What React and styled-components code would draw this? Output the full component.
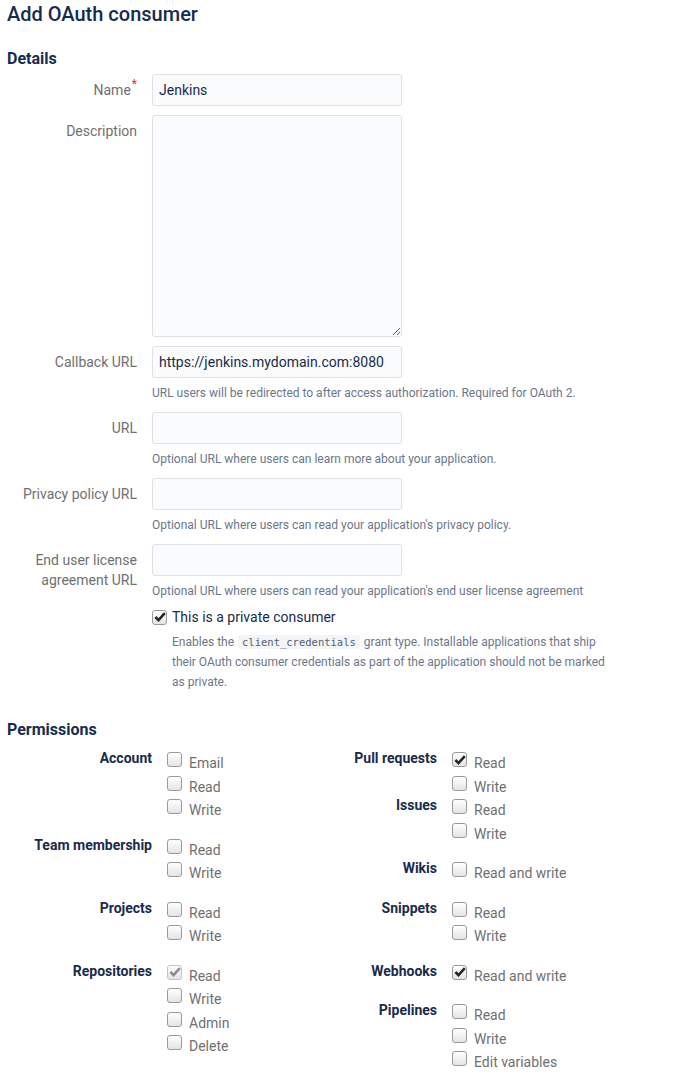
import React from "react";
import styled, { createGlobalStyle } from "styled-components";

const GlobalStyle = createGlobalStyle`
  body {
    margin: 0;
    background: #fff;
    font-family: Roboto, "Liberation Sans", sans-serif;
    color: #172b4d;
  }
`;

const Page = styled.div`
  padding: 2px 7px 20px;
`;

const Title = styled.h1`
  margin: 0;
  font-size: 20px;
  line-height: 24px;
  font-weight: 500;
  color: #172b4d;
`;

const SectionTitle = styled.h2`
  margin: ${(p) => p.$top}px 0 0;
  font-size: 16px;
  line-height: 20px;
  font-weight: 700;
  color: #172b4d;
`;

const Form = styled.div`
  display: flex;
  flex-direction: column;
  gap: 9px;
  margin-top: 5px;
`;

const Row = styled.div`
  display: grid;
  grid-template-columns: 130px 1fr;
  column-gap: 15px;
`;

const Label = styled.label`
  padding-top: 6px;
  font-size: 14px;
  line-height: 20px;
  color: #707070;
  text-align: right;
`;

const Required = styled.span`
  color: #de350b;
  font-size: 12px;
  vertical-align: top;
  position: relative;
  top: -6px;
  margin-left: 1px;
`;

const Field = styled.div`
  display: flex;
  flex-direction: column;
`;

const Input = styled.input`
  box-sizing: border-box;
  width: 250px;
  height: 32px;
  padding: 0 6px;
  border: 1px solid #dfe1e6;
  border-radius: 3px;
  background: #fafbfc;
  font-family: Roboto, "Liberation Sans", sans-serif;
  font-size: 14px;
  color: #172b4d;
  outline: none;
`;

const TextArea = styled.textarea`
  box-sizing: border-box;
  width: 250px;
  height: 222px;
  border: 1px solid #dfe1e6;
  border-radius: 3px;
  background: #fafbfc;
  outline: none;
  display: block;
`;

const Help = styled.div`
  margin-top: 6px;
  font-size: 12px;
  line-height: 19px;
  color: #6b778c;
`;

const PrivateRow = styled.div`
  display: flex;
  align-items: center;
  gap: 5px;
  margin-top: 6px;
  height: 20px;
  font-size: 14px;
  color: #172b4d;
`;

const PrivateHelp = styled.div`
  margin: 5px 0 0 20px;
  max-width: 440px;
  font-size: 12px;
  line-height: 20px;
  color: #6b778c;
`;

const Code = styled.code`
  display: inline-block;
  font-family: "DejaVu Sans Mono", "Liberation Mono", monospace;
  font-size: 10.5px;
  line-height: 14px;
  background: #f4f5f7;
  color: #505f79;
  padding: 0 4px;
  margin: 0 1px;
  border-radius: 3px;
`;

const Perms = styled.div`
  display: grid;
  grid-template-columns: 285px 285px;
  margin-top: 8px;
`;

const Column = styled.div`
  display: flex;
  flex-direction: column;
`;

const Group = styled.div`
  display: grid;
  grid-template-columns: 145px 1fr;
  column-gap: 15px;
  margin-bottom: ${(p) => (p.$tight ? 0 : 16)}px;
`;

const GroupLabel = styled.div`
  font-size: 14px;
  line-height: 20px;
  font-weight: 700;
  color: #172b4d;
  text-align: right;
`;

const Items = styled.div`
  display: flex;
  flex-direction: column;
`;

const Item = styled.div`
  display: flex;
  align-items: flex-start;
  gap: 7px;
  height: 23.5px;
  font-size: 14px;
  color: #707070;
`;

const ItemText = styled.span`
  padding-top: 5px;
  line-height: 20px;
`;

const Box = styled.span`
  box-sizing: border-box;
  flex: none;
  width: 15px;
  height: 15px;
  margin-top: ${(p) => p.$top ?? 4}px;
  border: 1px solid ${(p) => (p.$disabled ? "#c4c4c4" : "#9a9a9a")};
  border-radius: 3px;
  background: linear-gradient(#ffffff, #e4e4e4);
  display: flex;
  align-items: center;
  justify-content: center;
`;

function CheckBox({ checked, disabled, top }) {
  return (
    <Box $disabled={disabled} $top={top}>
      {checked && (
        <svg width="12" height="12" viewBox="0 0 12 12">
          <path
            d="M1.4 6 L4.5 9.1 L10.8 2.2"
            fill="none"
            stroke={disabled ? "#8d8d8d" : "#262626"}
            strokeWidth="2.6"
          />
        </svg>
      )}
    </Box>
  );
}

const leftGroups = [
  { name: "Account", items: ["Email", "Read", "Write"] },
  { name: "Team membership", items: ["Read", "Write"] },
  { name: "Projects", items: ["Read", "Write"] },
  {
    name: "Repositories",
    items: [{ t: "Read", checked: true, disabled: true }, "Write", "Admin", "Delete"],
  },
];

const rightGroups = [
  { name: "Pull requests", items: [{ t: "Read", checked: true }, "Write"], tight: true },
  { name: "Issues", items: ["Read", "Write"] },
  { name: "Wikis", items: ["Read and write"] },
  { name: "Snippets", items: ["Read", "Write"] },
  { name: "Webhooks", items: [{ t: "Read and write", checked: true }] },
  { name: "Pipelines", items: ["Read", "Write", "Edit variables"] },
];

function PermColumn({ groups }) {
  return (
    <Column>
      {groups.map((g) => (
        <Group key={g.name} $tight={g.tight}>
          <GroupLabel>{g.name}</GroupLabel>
          <Items>
            {g.items.map((it, i) => {
              const item = typeof it === "string" ? { t: it } : it;
              return (
                <Item key={i}>
                  <CheckBox checked={item.checked} disabled={item.disabled} />
                  <ItemText>{item.t}</ItemText>
                </Item>
              );
            })}
          </Items>
        </Group>
      ))}
    </Column>
  );
}

const urlFields = [
  {
    label: "Callback URL",
    value: "https://jenkins.mydomain.com:8080",
    help: "URL users will be redirected to after access authorization. Required for OAuth 2.",
  },
  {
    label: "URL",
    value: "",
    help: "Optional URL where users can learn more about your application.",
  },
  {
    label: "Privacy policy URL",
    value: "",
    help: "Optional URL where users can read your application's privacy policy.",
  },
];

export default function App() {
  return (
    <Page>
      <GlobalStyle />
      <Title>Add OAuth consumer</Title>
      <SectionTitle $top={23}>Details</SectionTitle>
      <Form>
        <Row>
          <Label>
            Name<Required>*</Required>
          </Label>
          <Field>
            <Input defaultValue="Jenkins" />
          </Field>
        </Row>
        <Row>
          <Label>Description</Label>
          <Field>
            <TextArea />
          </Field>
        </Row>
        {urlFields.map((f) => (
          <Row key={f.label}>
            <Label>{f.label}</Label>
            <Field>
              <Input defaultValue={f.value} />
              <Help>{f.help}</Help>
            </Field>
          </Row>
        ))}
        <Row>
          <Label>
            End user license
            <br />
            agreement URL
          </Label>
          <Field>
            <Input />
            <Help>Optional URL where users can read your application's end user license agreement</Help>
            <PrivateRow>
              <CheckBox checked top={0} />
              <span>This is a private consumer</span>
            </PrivateRow>
            <PrivateHelp>
              Enables the <Code>client_credentials</Code> grant type. Installable applications that
              ship their OAuth consumer credentials as part of the application should not be marked
              as private.
            </PrivateHelp>
          </Field>
        </Row>
      </Form>
      <SectionTitle $top={28}>Permissions</SectionTitle>
      <Perms>
        <PermColumn groups={leftGroups} />
        <PermColumn groups={rightGroups} />
      </Perms>
    </Page>
  );
}
